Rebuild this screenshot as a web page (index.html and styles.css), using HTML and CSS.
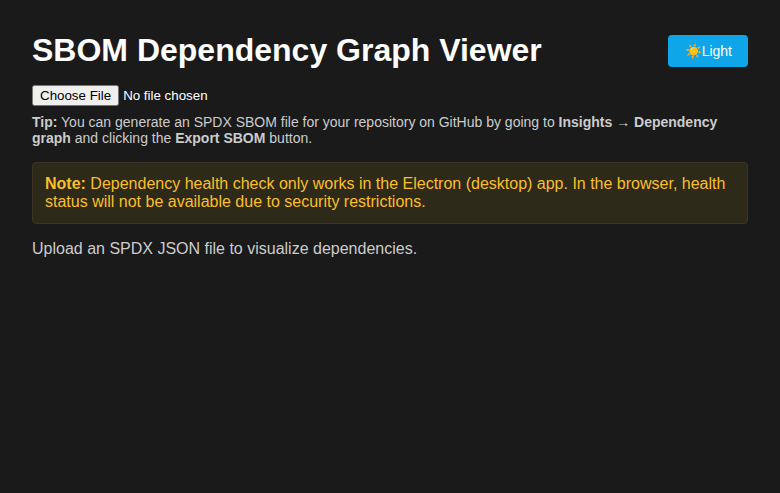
FILE: index.html
```html
<!DOCTYPE html>
<html lang="en">
<head>
<meta charset="utf-8">
<title>SBOM Dependency Graph Viewer</title>
<link rel="stylesheet" href="styles.css">
</head>
<body>
<main class="app">
  <header class="header">
    <h1 class="title">SBOM Dependency Graph Viewer</h1>
    <button class="theme-toggle" type="button"><span>☀️</span><span>Light</span></button>
  </header>
  <input class="file" type="file">
  <p class="tip"><strong>Tip:</strong> You can generate an SPDX SBOM file for your repository on GitHub by going to <strong>Insights → Dependency graph</strong> and clicking the <strong>Export SBOM</strong> button.</p>
  <div class="note"><strong>Note:</strong> Dependency health check only works in the Electron (desktop) app. In the browser, health status will not be available due to security restrictions.</div>
  <p class="hint">Upload an SPDX JSON file to visualize dependencies.</p>
</main>
</body>
</html>
```
FILE: styles.css
```css
body {
  margin: 0;
  background: #1a1a1a;
  color: #fff;
  font-family: "Liberation Sans", Arial, sans-serif;
}
.app { padding: 32px; }
.header {
  display: flex;
  justify-content: space-between;
  align-items: center;
  margin-bottom: 16px;
}
.title { margin: 0; font-size: 32px; line-height: 37px; }
.theme-toggle {
  display: flex;
  align-items: center;
  justify-content: flex-end;
  min-width: 80px;
  height: 32px;
  padding: 0 16px;
  border: 0;
  border-radius: 4px;
  background: #0ea5e9;
  color: #fff;
  font: 14px "Liberation Sans", Arial, sans-serif;
}
.file { display: block; }
.tip { margin: 8px 0 16px; color: #ccc; font-size: 14px; line-height: 16px; }
.note {
  padding: 12px;
  border: 1px solid #3d3426;
  border-radius: 4px;
  background: #2d2a1a;
  color: #fbbf24;
  font-size: 16px;
  line-height: 18px;
}
.hint { margin: 16px 0; color: #ccc; font-size: 16px; line-height: 18px; }
```
